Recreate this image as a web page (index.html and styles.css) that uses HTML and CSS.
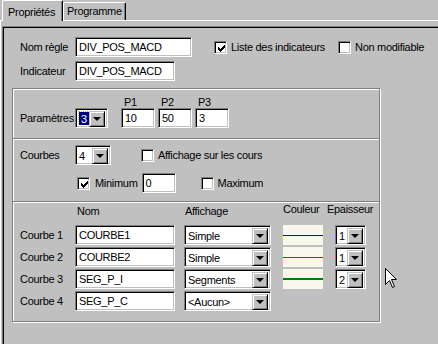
FILE: index.html
```html
<!DOCTYPE html>
<html lang="fr">
<head>
    <meta charset="UTF-8">
    <title>Propriétés</title>
    <link rel="stylesheet" href="styles.css">
</head>
<body>
    <div class="tabs">
        <div class="tab active">Propriétés</div>
        <div class="tab">Programme</div>
    </div>
    <div class="sheet">
        <div class="client">
            <div class="head">
                <div class="row">
                    <span class="lbl">Nom règle</span>
                    <div class="edit w-rule">DIV_POS_MACD</div>
                    <div class="check gap-liste"><span class="box on"></span>Liste des indicateurs</div>
                    <div class="check gap-nonmod"><span class="box"></span>Non modifiable</div>
                </div>
                <div class="row">
                    <span class="lbl">Indicateur</span>
                    <div class="edit w-name">DIV_POS_MACD</div>
                </div>
            </div>

            <div class="group">
                <div class="section params">
                    <div class="row plabels">
                        <span class="p">P1</span>
                        <span class="p">P2</span>
                        <span class="p">P3</span>
                    </div>
                    <div class="row">
                        <span class="lbl">Paramètres</span>
                        <div class="combo w-nb"><span class="val"><span class="sel">3</span></span><span class="btn"></span></div>
                        <div class="edit w-p first">10</div>
                        <div class="edit w-p">50</div>
                        <div class="edit w-p">3</div>
                    </div>
                </div>

                <div class="section courbes">
                    <div class="row">
                        <span class="lbl">Courbes</span>
                        <div class="combo w-nb4"><span class="val">4</span><span class="btn"></span></div>
                        <div class="check gap-aff"><span class="box"></span>Affichage sur les cours</div>
                    </div>
                    <div class="row row2">
                        <div class="check gap-min"><span class="box on"></span>Minimum</div>
                        <div class="edit w-min">0</div>
                        <div class="check gap-max"><span class="box"></span>Maximum</div>
                    </div>
                </div>

                <div class="section curves">
                    <div class="row cols">
                        <span class="c-nom">Nom</span>
                        <span class="c-aff">Affichage</span>
                        <span class="c-col">Couleur</span>
                        <span class="c-ep">Epaisseur</span>
                    </div>
                    <div class="row">
                        <span class="lbl">Courbe 1</span>
                        <div class="edit w-name">COURBE1</div>
                        <div class="combo w-aff"><span class="val">Simple</span><span class="btn"></span></div>
                        <div class="swatch"><span class="line blue"></span></div>
                        <div class="combo w-ep"><span class="val">1</span><span class="btn"></span></div>
                    </div>
                    <div class="row">
                        <span class="lbl">Courbe 2</span>
                        <div class="edit w-name">COURBE2</div>
                        <div class="combo w-aff"><span class="val">Simple</span><span class="btn"></span></div>
                        <div class="swatch"><span class="line red"></span></div>
                        <div class="combo w-ep"><span class="val">1</span><span class="btn"></span></div>
                    </div>
                    <div class="row">
                        <span class="lbl">Courbe 3</span>
                        <div class="edit w-name">SEG_P_I</div>
                        <div class="combo w-aff"><span class="val">Segments</span><span class="btn"></span></div>
                        <div class="swatch"><span class="line green"></span></div>
                        <div class="combo w-ep"><span class="val">2</span><span class="btn"></span></div>
                    </div>
                    <div class="row">
                        <span class="lbl">Courbe 4</span>
                        <div class="edit w-name">SEG_P_C</div>
                        <div class="combo w-aff"><span class="val">&lt;Aucun&gt;</span><span class="btn"></span></div>
                    </div>
                </div>
            </div>
        </div>
    </div>

    <svg class="cursor" width="12" height="20" viewBox="0 0 12 20">
        <path d="M0.5 0.5 L0.5 16.5 L4.5 12.5 L7.5 19.5 L9.5 18.5 L6.5 11.5 L11.5 11.5 Z" fill="#fff" stroke="#000" stroke-width="1"/>
    </svg>
</body>
</html>
```

FILE: styles.css
```css
body {
    margin: 0;
    width: 438px;
    height: 344px;
    overflow: hidden;
    background: #c0c0c0;
    font-family: "Liberation Sans", Arial, sans-serif;
    font-size: 11px;
    letter-spacing: -0.3px;
    color: #000;
}

/* onglets */
.tabs {
    display: flex;
    align-items: flex-end;
    height: 20px;
    padding-left: 2px;
}

.tab {
    height: 17px;
    line-height: 17px;
    padding: 0 3px 0 3px;
    border: 1px solid;
    border-color: #fff #000 transparent #fff;
    border-bottom: none;
    border-radius: 2px 2px 0 0;
    box-shadow: inset -1px 0 #808080;
    width: 55px;
}

.tab.active {
    position: relative;
    z-index: 1;
    height: 20px;
    margin-bottom: -1px;
    background: #c0c0c0;
    padding: 0 3px 0 5px;
    width: 51px;
    line-height: 22px;
}

.sheet {
    box-sizing: border-box;
    border-top: 1px solid #fff;
    border-left: 1px solid #fff;
    height: 324px;
    overflow: hidden;
}

.client {
    box-sizing: border-box;
    margin: 5px 0 0 1px;
    border-top: 1px solid #808080;
    border-left: 1px solid #808080;
    box-shadow: inset 1px 1px #000;
    padding: 10px 0 0 17px;
    height: 318px;
}

/* lignes */
.row {
    display: flex;
    align-items: center;
    height: 20px;
}

.lbl {
    width: 55px;
    flex: none;
}

.head .row + .row {
    margin-top: 4px;
}

/* champs */
.edit, .combo {
    box-sizing: border-box;
    height: 20px;
    background: #fff;
    border: 1px solid;
    border-color: #808080 #fff #fff #808080;
    box-shadow: inset 1px 1px #000, inset -1px -1px #c0c0c0;
    padding: 2px 0 0 3px;
    line-height: 14px;
    white-space: nowrap;
    flex: none;
}

.combo {
    display: flex;
    padding: 2px;
}

.combo .val {
    flex: 1;
    padding-left: 1px;
    line-height: 16px;
    overflow: hidden;
}

.combo .btn {
    width: 16px;
    height: 16px;
    box-sizing: border-box;
    background: #c0c0c0;
    border: 1px solid;
    border-color: #c0c0c0 #000 #000 #c0c0c0;
    box-shadow: inset 1px 1px #fff, inset -1px -1px #808080;
    position: relative;
}

.combo .btn::after {
    content: "";
    position: absolute;
    left: 3px;
    top: 5px;
    border-left: 4px solid transparent;
    border-right: 4px solid transparent;
    border-top: 4px solid #000;
}

.sel {
    display: inline-block;
    background: #000080;
    color: #fff;
    outline: 1px dotted #c8c800;
    padding: 0 2px;
    line-height: 15px;
}

.w-rule { width: 117px; }
.w-name { width: 100px; }
.w-nb { width: 33px; }
.w-nb4 { width: 36px; }
.w-p { width: 34px; margin-left: 3px; }
.w-p.first { margin-left: 13px; }
.w-min { width: 34px; margin-left: 4px; }
.w-aff { width: 87px; margin-left: 9px; }
.w-ep { width: 31px; margin-left: 12px; }
.w-ep .val { padding-left: 1px; }

/* cases a cocher */
.check {
    display: flex;
    align-items: center;
    gap: 4px;
    flex: none;
}

.box {
    box-sizing: border-box;
    width: 13px;
    height: 13px;
    background: #fff;
    border: 1px solid;
    border-color: #808080 #fff #fff #808080;
    box-shadow: inset 1px 1px #000, inset -1px -1px #c0c0c0;
}

.box.on {
    background: #fff url("data:image/svg+xml;utf8,<svg xmlns='http://www.w3.org/2000/svg' width='7' height='7' shape-rendering='crispEdges'><path d='M6 0h1v3h-1v1h-1v1h-1v1h-1v1h-1v-1h-1v-1h-1v-3h1v1h1v1h1v-1h1v-1h1z' fill='black'/></svg>") no-repeat 3px 3px;
}

.gap-liste { margin-left: 22px; }
.gap-nonmod { margin-left: 13px; }
.gap-aff { margin-left: 30px; }
.gap-min { margin-left: 57px; gap: 5px; }
.gap-max { margin-left: 25px; }

/* cadre */
.group {
    box-sizing: border-box;
    width: 368px;
    margin: 7px 0 0 -8px;
    border: 1px solid #808080;
    box-shadow: inset 1px 1px #fff, 1px 1px #fff;
}

.section {
    padding-left: 7px;
}

.section + .section {
    border-top: 1px solid #808080;
    box-shadow: inset 0 1px #fff;
}

.params {
    padding-top: 6px;
    padding-bottom: 10px;
}

.plabels {
    height: 13px;
    padding-left: 104px;
}

.plabels .p {
    width: 37px;
}

.courbes {
    padding-top: 6px;
    padding-bottom: 8px;
}

.row2 {
    margin-top: 8px;
}

.curves {
    padding-top: 1px;
    padding-bottom: 10px;
}

.curves .row + .row {
    margin-top: 2px;
}

.cols {
    height: 20px;
    align-items: flex-start;
}

.cols span {
    flex: none;
}

.c-nom { margin-left: 57px; width: 108px; padding-top: 2px; }
.c-aff { width: 98px; padding-top: 2px; }
.c-col { width: 44px; }

.swatch {
    box-sizing: border-box;
    width: 40px;
    height: 20px;
    margin-left: 12px;
    background: #f7f7ec;
    display: flex;
    align-items: center;
    flex: none;
}

.line {
    width: 100%;
    height: 1px;
}

.line.blue { background: #0000ff; }
.line.red { background: #ff0000; }
.line.green { background: #008000; height: 2px; }

.cursor {
    position: absolute;
    left: 385px;
    top: 268px;
}
```
